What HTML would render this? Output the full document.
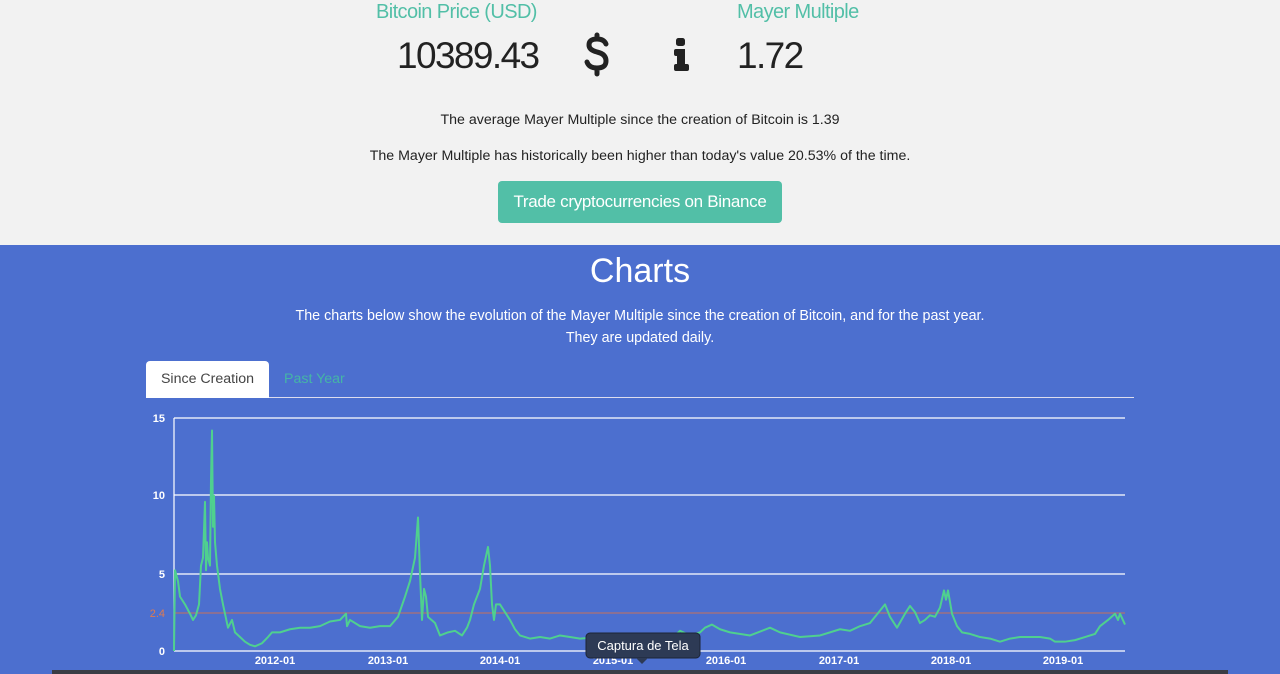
<!DOCTYPE html>
<html><head><meta charset="utf-8"><style>
body{margin:0;width:1280px;height:674px;overflow:hidden;font-family:"Liberation Sans",sans-serif;background:#f2f2f2;position:relative}
.a{position:absolute;white-space:nowrap}
.teal{color:#52bfa7}
</style></head><body>
<div class="a teal" style="left:376px;top:1px;font-size:20px;letter-spacing:-0.6px">Bitcoin Price (USD)</div>
<div class="a teal" style="left:737px;top:1px;font-size:20px;letter-spacing:-0.6px">Mayer Multiple</div>
<div class="a" style="left:397px;top:35px;font-size:37px;color:#222;letter-spacing:-1.6px">10389.43</div>
<div class="a" style="left:737px;top:35px;font-size:37px;color:#222;letter-spacing:-1.6px">1.72</div>
<svg class="a" style="left:580px;top:32px" width="34" height="48" viewBox="0 0 34 48"><path d="M26 12 Q24 7 17 7 Q9 7 9 13 Q9 18 17 20 Q26 22 26 29 Q26 36 17 36 Q9 36 7 30 M17 3 V7 M17 36 V42" fill="none" stroke="#222" stroke-width="5" stroke-linecap="round"/></svg>
<svg class="a" style="left:672px;top:37px" width="20" height="36" viewBox="0 0 20 36"><rect x="4" y="1" width="9" height="8" rx="2.5" fill="#222"/><path d="M2 14 Q2 12 4 12 H13 V27 H15 Q17 27 17 29 V32 Q17 34 15 34 H4 Q2 34 2 32 V29 Q2 27 4 27 H5 V19 H4 Q2 19 2 17 Z" fill="#222"/></svg>
<div class="a" style="left:0;width:1280px;text-align:center;top:112px;font-size:14.2px;color:#222">The average Mayer Multiple since the creation of Bitcoin is 1.39</div>
<div class="a" style="left:0;width:1280px;text-align:center;top:148px;font-size:14.2px;color:#222">The Mayer Multiple has historically been higher than today's value 20.53% of the time.</div>
<div class="a" style="left:498px;top:181px;width:284px;height:42px;background:#52bfa7;border-radius:4px;color:#fff;font-size:17px;text-align:center;line-height:42px;letter-spacing:-0.3px">Trade cryptocurrencies on Binance</div>
<div class="a" style="left:0;top:245px;width:1280px;height:429px;background:#4c6fcf"></div>
<div class="a" style="left:0;width:1280px;text-align:center;top:252px;font-size:34px;color:#fff">Charts</div>
<div class="a" style="left:0;width:1280px;text-align:center;top:305px;font-size:14.3px;color:#fff;line-height:22px">The charts below show the evolution of the Mayer Multiple since the creation of Bitcoin, and for the past year.<br>They are updated daily.</div>
<div class="a" style="left:146px;top:361px;width:123px;height:37px;background:#fff;border-radius:4px 4px 0 0;color:#444;font-size:14.2px;text-align:center;line-height:37px">Since Creation</div>
<div class="a" style="left:284px;top:361px;height:37px;line-height:37px;color:#45b5a6;font-size:14.2px">Past Year</div>
<div class="a" style="left:269px;top:397px;width:865px;height:1px;background:#dde"></div>
<svg class="a" style="left:0;top:0" width="1280" height="674">
<g fill="#fff" font-family="Liberation Sans" font-size="11" font-weight="bold" text-anchor="end">
<text x="165" y="422">15</text><text x="165" y="499">10</text><text x="165" y="578">5</text><text x="165" y="655">0</text>
<text x="165" y="617" fill="#e07a50" font-weight="normal">2.4</text></g>
<g fill="#fff" font-family="Liberation Sans" font-size="11" font-weight="bold" text-anchor="middle">
<text x="275" y="664">2012-01</text><text x="388" y="664">2013-01</text><text x="500" y="664">2014-01</text><text x="613" y="664">2015-01</text><text x="726" y="664">2016-01</text><text x="839" y="664">2017-01</text><text x="951" y="664">2018-01</text><text x="1063" y="664">2019-01</text></g>
<g stroke="#fff" stroke-width="1.2"><line x1="174" y1="418" x2="1125" y2="418"/><line x1="174" y1="495" x2="1125" y2="495"/><line x1="174" y1="574" x2="1125" y2="574"/><line x1="174" y1="651" x2="1125" y2="651"/><line x1="174" y1="418" x2="174" y2="651"/></g>
<line x1="174" y1="613" x2="1125" y2="613" stroke="#c9705a" stroke-width="1"/>
<g transform="translate(0,651) scale(1,-15.53)">
<polyline vector-effect="non-scaling-stroke" fill="none" stroke="#4fd08f" stroke-width="2" stroke-linejoin="round" points="174,0 175,5.2 178,4.5 180,3.5 185,3 190,2.4 193,2.0 196,2.3 199,3 201,5.5 203,6 205,9.6 206,5.2 207,7 208,6 210,5.5 211,11 212,14.2 213,8 214,10 215,7 217,5.5 220,4 223,3 228,1.5 232,2 235,1.2 240,0.9 245,0.6 250,0.4 255,0.3 262,0.5 268,0.9 272,1.2 280,1.2 290,1.4 300,1.5 310,1.5 320,1.6 330,1.9 340,2.0 346,2.4 347,1.6 350,2.0 360,1.6 370,1.5 380,1.6 390,1.6 398,2.2 405,3.5 410,4.5 415,6 418,8.6 420,5 422,2.0 424,4 426,3.5 428,2.2 435,1.8 440,1.0 448,1.2 455,1.3 462,1.0 467,1.5 470,2 474,3 480,4 484,5.5 488,6.7 490,5.5 492,3 494,2 496,3 500,3 505,2.5 510,2 515,1.4 520,1.0 530,0.8 540,0.9 550,0.8 560,1.0 570,0.9 580,0.8 600,0.9 610,0.8 625,0.7 640,0.6 660,0.9 675,1.0 680,1.3 690,1.0 700,1.2 705,1.5 712,1.7 720,1.4 730,1.2 750,1.0 770,1.5 780,1.2 800,0.9 820,1.0 840,1.4 850,1.3 860,1.6 870,1.8 880,2.6 885,3.0 890,2.2 897,1.5 905,2.4 910,2.9 915,2.5 920,1.8 925,2.0 930,2.3 935,2.2 940,2.8 944,3.9 946,3.3 948,3.9 952,2.4 957,1.6 962,1.2 970,1.1 980,0.9 990,0.8 1000,0.6 1010,0.8 1020,0.9 1040,0.9 1050,0.8 1055,0.6 1065,0.6 1075,0.7 1085,0.9 1095,1.1 1100,1.6 1108,2.0 1115,2.4 1118,2.0 1120,2.4 1125,1.7"/>
</g>
<rect x="52" y="670" width="1176" height="6" fill="#3a3d45"/>
<rect x="586" y="633" width="114" height="25" rx="4" fill="#2d3a55" stroke="#1c2436"/>
<path d="M636 658 L642 664 L648 658 Z" fill="#2d3a55"/>
<text x="643" y="650" fill="#fff" font-family="Liberation Sans" font-size="13" text-anchor="middle">Captura de Tela</text>
</svg>
</body></html>
